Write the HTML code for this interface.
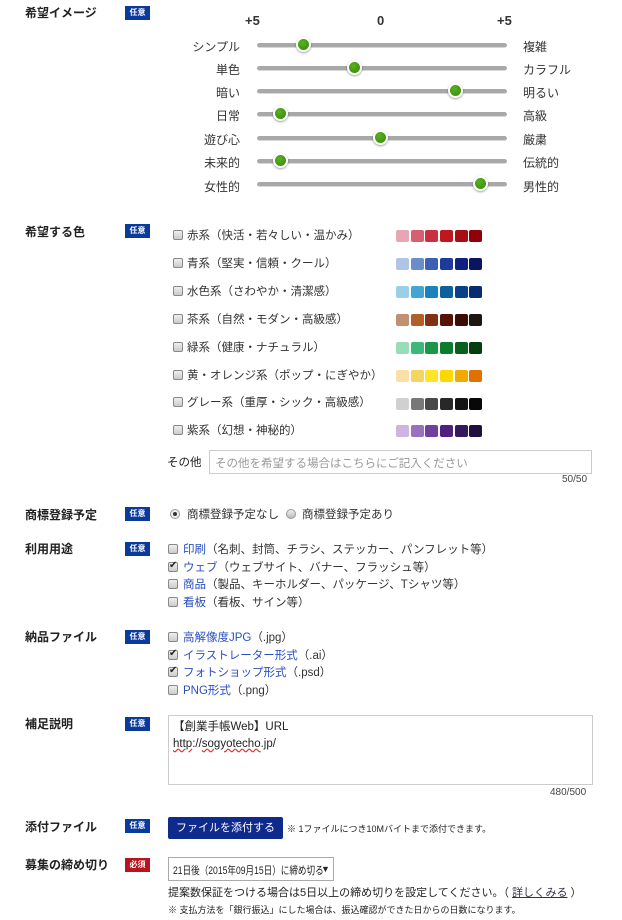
<!DOCTYPE html>
<html><head><meta charset="utf-8"><style>
*{margin:0;padding:0;box-sizing:border-box}
body{width:622px;height:920px;background:#fff;font-family:"Liberation Sans","Noto Sans CJK JP",sans-serif;font-size:11.5px;color:#333;position:relative;overflow:hidden}
.a{position:absolute;white-space:nowrap}
.lbl{font-weight:bold;color:#222;font-size:12px}
.bd{position:absolute;width:25px;height:14px;background:#0a3a9c;color:#fff;font-size:8px;font-weight:bold;text-align:center;line-height:14px}
.bd.r{background:#b8141e}
.trk{position:absolute;left:257px;width:250px;height:5px;border-radius:3px;background:#a8a8a8;border-bottom:1px solid #d8d8d8}
.kn{position:absolute;width:15px;height:15px;border-radius:50%;background:radial-gradient(circle at 40% 35%,#5cb020,#2f8a08);border:2px solid #fff;box-shadow:0 1px 2px rgba(0,0,0,.4)}
.sl{font-size:12px;color:#333}
.cb{position:absolute;width:10px;height:10px;border:1px solid #888;border-radius:2px;background:linear-gradient(#eee,#ccc)}
.lk{color:#2a4fc0}
.ck::after{content:"✔";position:absolute;left:0;top:-3px;font-size:10px;color:#222}
</style></head><body>

<div class="a lbl" style="left:25px;top:4px">希望イメージ</div><div class="bd" style="left:125px;top:6px">任意</div>
<div class="a" style="left:245px;top:13px;font-weight:bold;font-size:13px">+5</div>
<div class="a" style="left:377px;top:13px;font-weight:bold;font-size:13px">0</div>
<div class="a" style="left:497px;top:13px;font-weight:bold;font-size:13px">+5</div>

<div class="a sl" style="right:382px;top:38px">シンプル</div><div class="trk" style="top:43px"></div><div class="kn" style="left:296px;top:37px"></div><div class="a sl" style="left:523px;top:38px">複雑</div>
<div class="a sl" style="right:382px;top:61px">単色</div><div class="trk" style="top:66px"></div><div class="kn" style="left:347px;top:60px"></div><div class="a sl" style="left:523px;top:61px">カラフル</div>
<div class="a sl" style="right:382px;top:84px">暗い</div><div class="trk" style="top:89px"></div><div class="kn" style="left:448px;top:83px"></div><div class="a sl" style="left:523px;top:84px">明るい</div>
<div class="a sl" style="right:382px;top:107px">日常</div><div class="trk" style="top:112px"></div><div class="kn" style="left:273px;top:106px"></div><div class="a sl" style="left:523px;top:107px">高級</div>
<div class="a sl" style="right:382px;top:131px">遊び心</div><div class="trk" style="top:136px"></div><div class="kn" style="left:373px;top:130px"></div><div class="a sl" style="left:523px;top:131px">厳粛</div>
<div class="a sl" style="right:382px;top:154px">未来的</div><div class="trk" style="top:159px"></div><div class="kn" style="left:273px;top:153px"></div><div class="a sl" style="left:523px;top:154px">伝統的</div>
<div class="a sl" style="right:382px;top:178px">女性的</div><div class="trk" style="top:182px"></div><div class="kn" style="left:473px;top:176px"></div><div class="a sl" style="left:523px;top:178px">男性的</div>

<div class="a lbl" style="left:25px;top:223px">希望する色</div><div class="bd" style="left:125px;top:224px">任意</div>

<div class="cb" style="left:173px;top:230px"></div><div class="a" style="left:187px;top:227px">赤系（快活・若々しい・温かみ）</div>
<div class="cb" style="left:173px;top:258px"></div><div class="a" style="left:187px;top:255px">青系（堅実・信頼・クール）</div>
<div class="cb" style="left:173px;top:286px"></div><div class="a" style="left:187px;top:283px">水色系（さわやか・清潔感）</div>
<div class="cb" style="left:173px;top:314px"></div><div class="a" style="left:187px;top:311px">茶系（自然・モダン・高級感）</div>
<div class="cb" style="left:173px;top:342px"></div><div class="a" style="left:187px;top:339px">緑系（健康・ナチュラル）</div>
<div class="cb" style="left:173px;top:370px"></div><div class="a" style="left:187px;top:367px">黄・オレンジ系（ポップ・にぎやか）</div>
<div class="cb" style="left:173px;top:397px"></div><div class="a" style="left:187px;top:394px">グレー系（重厚・シック・高級感）</div>
<div class="cb" style="left:173px;top:425px"></div><div class="a" style="left:187px;top:422px">紫系（幻想・神秘的）</div>

<svg class="a" style="left:396px;top:230px" width="90" height="210">
<rect x="0" y="0" width="13" height="12" rx="2" fill="#e8a6b4"/><rect x="15" y="0" width="13" height="12" rx="2" fill="#d7606f"/><rect x="29" y="0" width="13" height="12" rx="2" fill="#cc2e40"/><rect x="44" y="0" width="13" height="12" rx="2" fill="#c0161e"/><rect x="59" y="0" width="13" height="12" rx="2" fill="#a90d14"/><rect x="73" y="0" width="13" height="12" rx="2" fill="#900008"/>
<rect x="0" y="28" width="13" height="12" rx="2" fill="#b0c4e4"/><rect x="15" y="28" width="13" height="12" rx="2" fill="#6a8cc8"/><rect x="29" y="28" width="13" height="12" rx="2" fill="#3a5fb4"/><rect x="44" y="28" width="13" height="12" rx="2" fill="#1e3a9a"/><rect x="59" y="28" width="13" height="12" rx="2" fill="#0f2080"/><rect x="73" y="28" width="13" height="12" rx="2" fill="#0a1560"/>
<rect x="0" y="56" width="13" height="12" rx="2" fill="#9ad0e6"/><rect x="15" y="56" width="13" height="12" rx="2" fill="#42a6d4"/><rect x="29" y="56" width="13" height="12" rx="2" fill="#1a82bc"/><rect x="44" y="56" width="13" height="12" rx="2" fill="#0f5f9c"/><rect x="59" y="56" width="13" height="12" rx="2" fill="#0a4088"/><rect x="73" y="56" width="13" height="12" rx="2" fill="#082a6e"/>
<rect x="0" y="84" width="13" height="12" rx="2" fill="#c09070"/><rect x="15" y="84" width="13" height="12" rx="2" fill="#b45e28"/><rect x="29" y="84" width="13" height="12" rx="2" fill="#843016"/><rect x="44" y="84" width="13" height="12" rx="2" fill="#5a1208"/><rect x="59" y="84" width="13" height="12" rx="2" fill="#3c0c04"/><rect x="73" y="84" width="13" height="12" rx="2" fill="#201410"/>
<rect x="0" y="112" width="13" height="12" rx="2" fill="#98dcb8"/><rect x="15" y="112" width="13" height="12" rx="2" fill="#3cb878"/><rect x="29" y="112" width="13" height="12" rx="2" fill="#1a9848"/><rect x="44" y="112" width="13" height="12" rx="2" fill="#0a7c2c"/><rect x="59" y="112" width="13" height="12" rx="2" fill="#08601c"/><rect x="73" y="112" width="13" height="12" rx="2" fill="#043e10"/>
<rect x="0" y="140" width="13" height="12" rx="2" fill="#fae0a8"/><rect x="15" y="140" width="13" height="12" rx="2" fill="#f6d464"/><rect x="29" y="140" width="13" height="12" rx="2" fill="#fde428"/><rect x="44" y="140" width="13" height="12" rx="2" fill="#fcd800"/><rect x="59" y="140" width="13" height="12" rx="2" fill="#f2a800"/><rect x="73" y="140" width="13" height="12" rx="2" fill="#e07000"/>
<rect x="0" y="168" width="13" height="12" rx="2" fill="#d0d0d0"/><rect x="15" y="168" width="13" height="12" rx="2" fill="#787878"/><rect x="29" y="168" width="13" height="12" rx="2" fill="#484848"/><rect x="44" y="168" width="13" height="12" rx="2" fill="#282828"/><rect x="59" y="168" width="13" height="12" rx="2" fill="#141414"/><rect x="73" y="168" width="13" height="12" rx="2" fill="#080808"/>
<rect x="0" y="195" width="13" height="12" rx="2" fill="#d0b4e0"/><rect x="15" y="195" width="13" height="12" rx="2" fill="#9c70c0"/><rect x="29" y="195" width="13" height="12" rx="2" fill="#7040a0"/><rect x="44" y="195" width="13" height="12" rx="2" fill="#502080"/><rect x="59" y="195" width="13" height="12" rx="2" fill="#341860"/><rect x="73" y="195" width="13" height="12" rx="2" fill="#201040"/>
</svg>

<div class="a" style="left:167px;top:454px;color:#222">その他</div>
<div class="a" style="left:209px;top:450px;width:383px;height:24px;border:1px solid #ccc;padding:4px 5px;color:#999">その他を希望する場合はこちらにご記入ください</div>
<div class="a" style="left:562px;top:474px;font-size:10px;color:#444">50/50</div>

<div class="a lbl" style="left:25px;top:506px">商標登録予定</div><div class="bd" style="left:125px;top:507px">任意</div>
<div class="a" style="left:170px;top:509px;width:10px;height:10px;border-radius:50%;border:1px solid #999;background:#eee"><div style="margin:2px;width:4px;height:4px;border-radius:50%;background:#333"></div></div>
<div class="a" style="left:187px;top:506px">商標登録予定なし</div>
<div class="a" style="left:286px;top:509px;width:10px;height:10px;border-radius:50%;border:1px solid #999;background:linear-gradient(#eee,#bbb)"></div>
<div class="a" style="left:302px;top:506px">商標登録予定あり</div>

<div class="a lbl" style="left:25px;top:540px">利用用途</div><div class="bd" style="left:125px;top:542px">任意</div>
<div class="cb" style="left:168px;top:544px"></div><div class="a" style="left:183px;top:541px"><span class="lk">印刷</span>（名刺、封筒、チラシ、ステッカー、パンフレット等）</div>
<div class="cb ck" style="left:168px;top:562px"></div><div class="a" style="left:183px;top:559px"><span class="lk">ウェブ</span>（ウェブサイト、バナー、フラッシュ等）</div>
<div class="cb" style="left:168px;top:579px"></div><div class="a" style="left:183px;top:576px"><span class="lk">商品</span>（製品、キーホルダー、パッケージ、Tシャツ等）</div>
<div class="cb" style="left:168px;top:597px"></div><div class="a" style="left:183px;top:594px"><span class="lk">看板</span>（看板、サイン等）</div>

<div class="a lbl" style="left:25px;top:628px">納品ファイル</div><div class="bd" style="left:125px;top:630px">任意</div>
<div class="cb" style="left:168px;top:632px"></div><div class="a" style="left:183px;top:629px"><span class="lk">高解像度JPG</span>（.jpg）</div>
<div class="cb ck" style="left:168px;top:650px"></div><div class="a" style="left:183px;top:647px"><span class="lk">イラストレーター形式</span>（.ai）</div>
<div class="cb ck" style="left:168px;top:667px"></div><div class="a" style="left:183px;top:664px"><span class="lk">フォトショップ形式</span>（.psd）</div>
<div class="cb" style="left:168px;top:685px"></div><div class="a" style="left:183px;top:682px"><span class="lk">PNG形式</span>（.png）</div>

<div class="a lbl" style="left:25px;top:715px">補足説明</div><div class="bd" style="left:125px;top:717px">任意</div>
<div class="a" style="left:168px;top:715px;width:425px;height:70px;border:1px solid #ccc;padding:3px 4px;line-height:17px;color:#222">【創業手帳Web】URL<br><span style="text-decoration:underline wavy #e03030">http</span>://<span style="text-decoration:underline wavy #e03030">sogyotecho</span>.jp/</div>
<div class="a" style="left:550px;top:787px;font-size:10px;color:#444">480/500</div>

<div class="a lbl" style="left:25px;top:818px">添付ファイル</div><div class="bd" style="left:125px;top:819px">任意</div>
<div class="a" style="left:168px;top:817px;width:115px;height:22px;background:#0e2a8c;border-radius:2px;color:#fff;text-align:center;line-height:22px;font-size:11px">ファイルを添付する</div>
<div class="a" style="left:287px;top:822px;font-size:9px;color:#222">※ 1ファイルにつき10Mバイトまで添付できます。</div>

<div class="a lbl" style="left:25px;top:856px">募集の締め切り</div><div class="bd r" style="left:125px;top:858px">必須</div>
<div class="a" style="left:168px;top:857px;width:166px;height:24px;border:1px solid #aaa"></div>
<div class="a" style="left:173px;top:862px;color:#222;font-size:11px;transform:scaleX(0.78);transform-origin:0 0">21日後（2015年09月15日）に締め切る</div>
<div class="a" style="left:321px;top:864px;font-size:9px;color:#222">▼</div>
<div class="a" style="left:168px;top:884px;font-size:11px;color:#222">提案数保証をつける場合は5日以上の締め切りを設定してください。（ <span style="color:#334;text-decoration:underline">詳しくみる</span> ）</div>
<div class="a" style="left:168px;top:903px;font-size:9px;color:#222">※ 支払方法を「銀行振込」にした場合は、振込確認ができた日からの日数になります。</div>
</body></html>
